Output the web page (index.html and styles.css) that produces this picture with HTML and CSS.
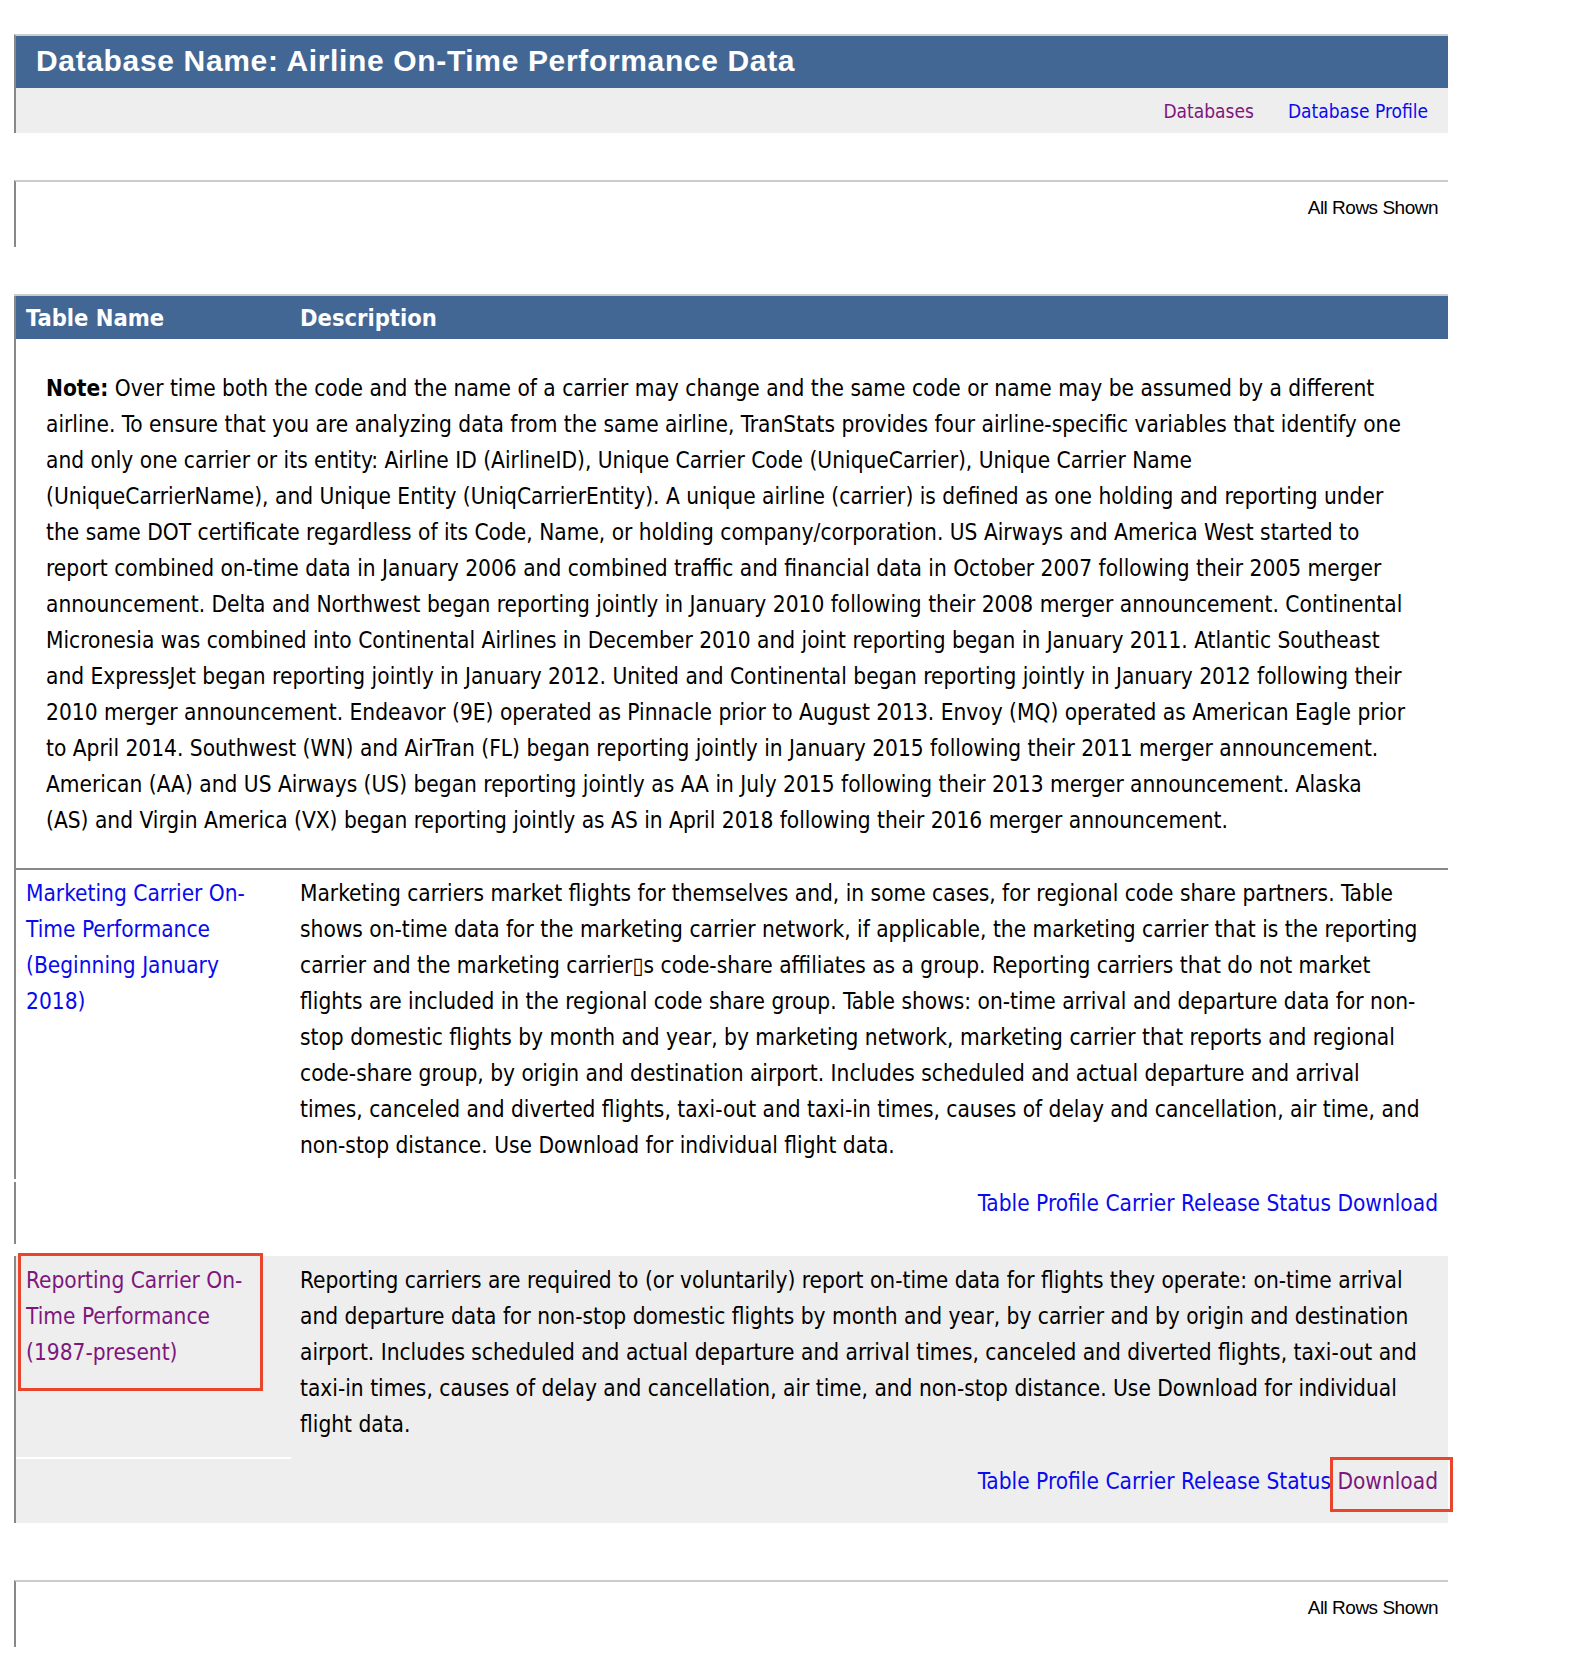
FILE: index.html
```html
<!DOCTYPE html>
<html>
<head>
<meta charset="utf-8">
<title>Airline On-Time Performance Data</title>
<link rel="stylesheet" href="styles.css">
</head>
<body>
<div class="page">
  <div class="db-box">
    <div class="db-title">Database Name: Airline On-Time Performance Data</div>
    <div class="db-nav">
      <a class="visited" href="#">Databases</a>
      <a class="link" href="#">Database Profile</a>
    </div>
  </div>

  <div class="rows-box">All Rows Shown</div>

  <div class="tables">
    <div class="thead">
      <div class="col-name">Table Name</div>
      <div class="col-desc">Description</div>
    </div>
    <div class="note-row">
      <div class="note"><b>Note:</b> Over time both the code and the name of a carrier may change and the same code or name may be assumed by a different<br>airline. To ensure that you are analyzing data from the same airline, TranStats provides four airline-specific variables that identify one<br>and only one carrier or its entity: Airline ID (AirlineID), Unique Carrier Code (UniqueCarrier), Unique Carrier Name<br>(UniqueCarrierName), and Unique Entity (UniqCarrierEntity). A unique airline (carrier) is defined as one holding and reporting under<br>the same DOT certificate regardless of its Code, Name, or holding company/corporation. US Airways and America West started to<br>report combined on-time data in January 2006 and combined traffic and financial data in October 2007 following their 2005 merger<br>announcement. Delta and Northwest began reporting jointly in January 2010 following their 2008 merger announcement. Continental<br>Micronesia was combined into Continental Airlines in December 2010 and joint reporting began in January 2011. Atlantic Southeast<br>and ExpressJet began reporting jointly in January 2012. United and Continental began reporting jointly in January 2012 following their<br>2010 merger announcement. Endeavor (9E) operated as Pinnacle prior to August 2013. Envoy (MQ) operated as American Eagle prior<br>to April 2014. Southwest (WN) and AirTran (FL) began reporting jointly in January 2015 following their 2011 merger announcement.<br>American (AA) and US Airways (US) began reporting jointly as AA in July 2015 following their 2013 merger announcement. Alaska<br>(AS) and Virgin America (VX) began reporting jointly as AS in April 2018 following their 2016 merger announcement.</div>
    </div>

    <div class="trow trow-first">
      <div class="col-name"><a class="link" href="#">Marketing Carrier On-Time Performance (Beginning January 2018)</a></div>
      <div class="col-desc">Marketing carriers market flights for themselves and, in some cases, for regional code share partners. Table<br>shows on-time data for the marketing carrier network, if applicable, the marketing carrier that is the reporting<br>carrier and the marketing carrier&#9647;s code-share affiliates as a group. Reporting carriers that do not market<br>flights are included in the regional code share group. Table shows: on-time arrival and departure data for non-<br>stop domestic flights by month and year, by marketing network, marketing carrier that reports and regional<br>code-share group, by origin and destination airport. Includes scheduled and actual departure and arrival<br>times, canceled and diverted flights, taxi-out and taxi-in times, causes of delay and cancellation, air time, and<br>non-stop distance. Use Download for individual flight data.</div>
    </div>
    <div class="tlinks">
      <a class="link" href="#">Table Profile</a> <a class="link" href="#">Carrier Release Status</a> <a class="link" href="#">Download</a>
    </div>

    <div class="trow trow-alt">
      <div class="col-name"><a class="visited" href="#">Reporting Carrier On-Time Performance (1987-present)</a><span class="mark mark-name"></span></div>
      <div class="col-desc">Reporting carriers are required to (or voluntarily) report on-time data for flights they operate: on-time arrival<br>and departure data for non-stop domestic flights by month and year, by carrier and by origin and destination<br>airport. Includes scheduled and actual departure and arrival times, canceled and diverted flights, taxi-out and<br>taxi-in times, causes of delay and cancellation, air time, and non-stop distance. Use Download for individual<br>flight data.</div>
    </div>
    <div class="tlinks tlinks-alt">
      <a class="link" href="#">Table Profile</a> <a class="link" href="#">Carrier Release Status</a> <span class="dl-wrap"><a class="visited" href="#">Download</a><span class="mark mark-dl"></span></span>
    </div>
  </div>

  <div class="rows-box rows-box-bottom">All Rows Shown</div>
</div>
</body>
</html>
```

FILE: styles.css
```css
html, body {
  margin: 0;
  padding: 0;
  background: #ffffff;
}

body {
  font-family: "DejaVu Sans Condensed", "DejaVu Sans", sans-serif;
  font-size: 22.5px;
  color: #000000;
}

a {
  text-decoration: none;
}

a.link {
  color: #0a0aee;
}

a.visited {
  color: #7d177d;
}

.page {
  padding: 34px 0 12px 14px;
  width: 1434px;
}

/* database header box */
.db-box {
  border-top: 2px solid #cccccc;
  border-left: 2px solid #888888;
}

.db-title {
  background: #426795;
  color: #ffffff;
  font-family: "Liberation Sans", Arial, sans-serif;
  font-weight: bold;
  font-size: 30px;
  letter-spacing: 0.65px;
  height: 52px;
  line-height: 50px;
  padding-left: 20px;
}

.db-nav {
  background: #eeeeee;
  height: 45px;
  display: flex;
  justify-content: flex-end;
  align-items: center;
  gap: 34px;
  padding-right: 20px;
  font-size: 19px;
}

/* "All Rows Shown" boxes */
.rows-box {
  margin-top: 47px;
  border-top: 2px solid #cccccc;
  border-left: 2px solid #888888;
  height: 67px;
  box-sizing: border-box;
  padding: 15px 10px 0 0;
  text-align: right;
  font-family: "Liberation Sans", Arial, sans-serif;
  font-size: 19px;
  letter-spacing: -0.5px;
  line-height: 22px;
}

.rows-box-bottom {
  margin-top: 57px;
}

/* tables list */
.tables {
  margin-top: 47px;
  border-top: 2px solid #cccccc;
}

.thead {
  display: flex;
  background: #426795;
  color: #ffffff;
  font-weight: bold;
  font-size: 23.5px;
  height: 43px;
  align-items: center;
  border-left: 2px solid #888888;
}

.col-name {
  width: 275px;
  box-sizing: border-box;
  padding: 0 16px 0 10px;
  flex: none;
  position: relative;
}

.col-desc {
  flex: 1;
  min-width: 0;
  padding: 0 10px 0 9px;
}

.note-row {
  border-left: 2px solid #888888;
  border-bottom: 2px solid #888888;
  padding: 31px 32px 30px 30px;
  line-height: 36px;
}

.note {
  white-space: nowrap;
}

.trow {
  display: flex;
  border-left: 2px solid #888888;
  line-height: 36px;
}

.trow .col-desc {
  white-space: nowrap;
}

.trow .col-name,
.trow .col-desc {
  padding-top: 5px;
  padding-bottom: 16px;
}

.trow-alt {
  margin-top: 12px;
  background: #eeeeee;
}

.trow-alt .col-name {
  border-bottom: 2px solid #ffffff;
  padding-top: 6px;
  padding-bottom: 15px;
}

.trow-alt .col-desc {
  padding-top: 6px;
  padding-bottom: 17px;
}

.tlinks {
  margin-top: 3px;
  border-left: 2px solid #888888;
  height: 62px;
  box-sizing: border-box;
  padding: 3px 10px 0 0;
  text-align: right;
  line-height: 36px;
}

.tlinks-alt {
  margin-top: 0;
  background: #eeeeee;
  height: 64px;
  padding-top: 4px;
}

.dl-wrap {
  position: relative;
}

/* red annotation frames */
.mark {
  position: absolute;
  border: 3px solid #e8452c;
  pointer-events: none;
}

.mark-name {
  left: 2px;
  top: -3px;
  width: 239px;
  height: 132px;
}

.mark-dl {
  left: -7px;
  top: -11px;
  width: 117px;
  height: 49px;
}
```
